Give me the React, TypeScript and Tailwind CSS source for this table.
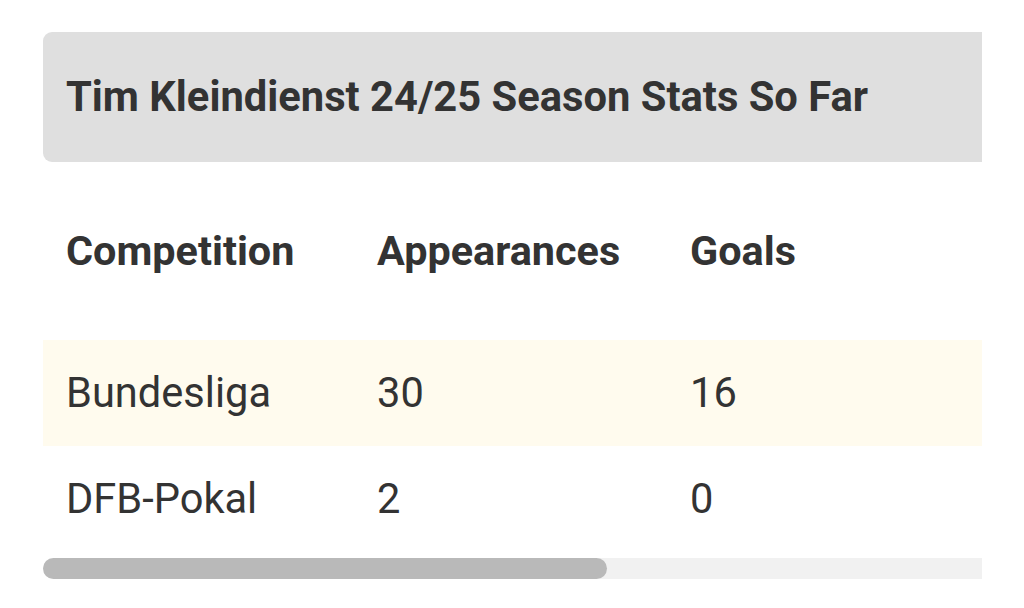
import React from 'react'

const rows = [
  { competition: 'Bundesliga', apps: '30', goals: '16', highlight: true },
  { competition: 'DFB-Pokal', apps: '2', goals: '0', highlight: false },
]

const font = { fontFamily: 'Roboto, "Noto Sans", sans-serif' }

const App: React.FC = () => {
  return (
    <div className="w-[1024px] h-[608px] bg-white text-[#333333]" style={font}>
      <div className="pt-[32px] pl-[43px]">
        <div className="w-[939px] overflow-hidden">
          <div className="h-[130px] bg-[#dfdfdf] rounded-l-[9px] flex items-center px-[23px]">
            <h2 className="text-[41.7px] font-bold whitespace-nowrap">Tim Kleindienst 24/25 Season Stats So Far</h2>
          </div>
          <table className="w-[1300px] border-collapse text-left">
            <thead>
              <tr className="h-[178px]">
                <th className="w-[311px] pl-[23px] text-[41.4px] font-bold">Competition</th>
                <th className="w-[313px] pl-[23px] text-[41.4px] font-bold">Appearances</th>
                <th className="pl-[23px] text-[41.4px] font-bold">Goals</th>
              </tr>
            </thead>
            <tbody>
              {rows.map((r) => (
                <tr key={r.competition} className={r.highlight ? 'h-[106px] bg-[#fffbee]' : 'h-[106px]'}>
                  <td className="pl-[23px] text-[41.6px] font-normal">{r.competition}</td>
                  <td className="pl-[23px] text-[41.6px] font-normal">{r.apps}</td>
                  <td className="pl-[23px] text-[41.6px] font-normal">{r.goals}</td>
                </tr>
              ))}
            </tbody>
          </table>
          <div className="mt-[6px] h-[21px] bg-[#f1f1f1] rounded-l-full">
            <div className="w-[564px] h-full bg-[#b9b9b9] rounded-full" />
          </div>
        </div>
      </div>
    </div>
  )
}

export default App
